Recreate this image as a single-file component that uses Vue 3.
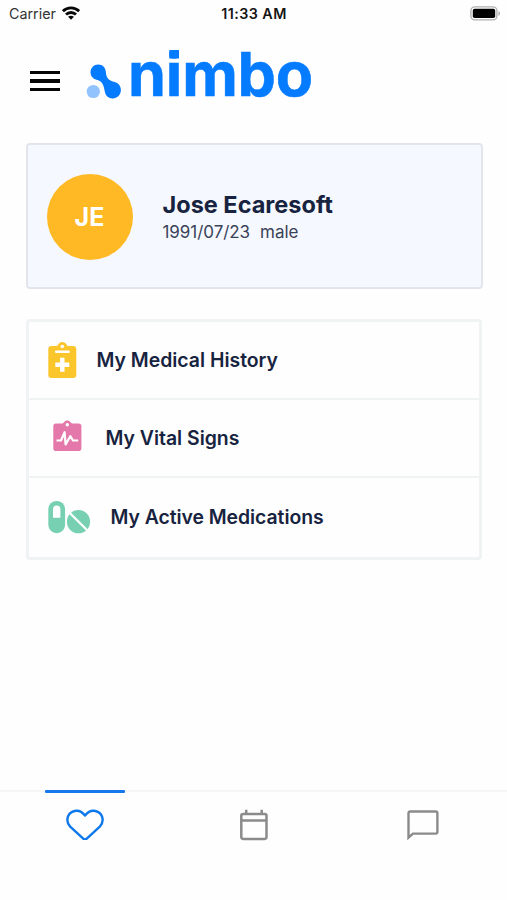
<script setup>
const items = [
  { id: 'history', label: 'My Medical History' },
  { id: 'vitals', label: 'My Vital Signs' },
  { id: 'meds', label: 'My Active Medications' },
]
</script>

<template>
  <div class="screen">
    <div class="status">
      <div class="carrier">
        <span>Carrier</span>
        <svg class="wifi" width="18" height="14" viewBox="0 0 18 14" fill="none" stroke="#080808" stroke-width="2.8">
          <path d="M.9 5.2C5.4.7 12.6.7 17.1 5.2" />
          <path d="M4 8.6C6.8 5.8 11.2 5.8 14 8.6" />
          <path d="M6.1 10.8C7.8 9.3 10.2 9.3 11.9 10.8L9 13.7Z" fill="#080808" stroke="none" />
        </svg>
      </div>
      <span class="time">11:33 AM</span>
      <svg class="battery" width="31" height="15" viewBox="0 0 31 15">
        <rect x=".9" y=".9" width="26" height="13" rx="4" fill="#fff" stroke="#b0b0b0" stroke-width="1.4" />
        <rect x="2.8" y="2.8" width="22.4" height="9.2" rx="1.8" fill="#000" />
        <path d="M28.4 5.2C30.6 5.9 30.6 9.1 28.4 9.8Z" fill="#b0b0b0" />
      </svg>
    </div>

    <header class="header">
      <button class="menu" aria-label="Menu"><i></i><i></i><i></i></button>
      <svg class="mark" width="37" height="36" viewBox="0 0 37 36">
        <circle cx="7.3" cy="28.5" r="6.6" fill="#92c3fd" />
        <path d="M12.2 1.6C16.7 1.6 19.7 5 19.9 9.3C20.2 14.8 23 17.9 27.8 18.7C32 19.4 34.9 22.7 34.9 27C34.9 31.8 31.3 35.5 26.7 35.5C22.3 35.500 19.4 32.4 18.8 28.5C17.8 21.6 15.8 17.9 11.3 16.9C7.2 16.2 4.5 13.100 4.500 9.300C4.500 5.100 7.900 1.600 12.200 1.600Z" fill="#057bff" />
      </svg>
      <span class="brand">n<span class="dotted">i</span>mbo</span>
    </header>

    <section class="profile">
      <div class="avatar">JE</div>
      <div class="who">
        <div class="name">Jose Ecaresoft</div>
        <div class="meta"><span>1991/07/23</span><span>male</span></div>
      </div>
    </section>

    <nav class="list">
      <div v-for="item in items" :key="item.id" class="row" :class="item.id">
        <svg v-if="item.id === 'history'" width="29" height="38" viewBox="0 0 29 38">
          <path d="M3.5 5H8.5C10.5 5 10 1 14.3 1S18.5 5 20 5H25Q28.3 5 28.3 8.3V33.7Q28.3 37 25 37H3.5Q.3 37 .3 33.7V8.3Q.3 5 3.5 5Z" fill="#fac62c" />
          <circle cx="14.3" cy="5.5" r="1.8" fill="#fff" />
          <path d="M8.2 10.8H20.6" stroke="#fff" stroke-width="2.6" stroke-linecap="round" />
          <path d="M14.3 16.7V30.7M7.3 23.7H21.3" stroke="#fff" stroke-width="4.4" />
        </svg>
        <svg v-else-if="item.id === 'vitals'" width="29" height="32" viewBox="0 0 29 32">
          <path d="M3 3.5H9.3C11 3.5 11 .6 14.3 .6S17.6 3.5 19.5 3.5H25.6Q28.4 3.5 28.4 6.3V28.2Q28.4 31 25.6 31H3Q.3 31 .3 28.2V6.3Q.3 3.5 3 3.5Z" fill="#e578aa" />
          <circle cx="14.3" cy="4.8" r="1.7" fill="#fff" />
          <path d="M3.5 20.5H8L11.6 12.2L12.6 24.5L17.3 16.200L20 20.500H25.200" fill="none" stroke="#fff" stroke-width="2.200" stroke-linejoin="round" />
        </svg>
        <svg v-else width="43" height="34" viewBox="0 0 43 34">
          <rect x=".3" y=".9" width="16.8" height="32.3" rx="8.4" fill="#77d0b2" />
          <path d="M5 17.8V9.3A3.7 3.7 0 0 1 12.4 9.3V17.8Z" fill="#fff" />
          <circle cx="30.5" cy="21.7" r="11.6" fill="#77d0b2" />
          <path d="M21.5 12.7L40 31" stroke="#fff" stroke-width="2.3" />
        </svg>
        <span class="label">{{ item.label }}</span>
      </div>
    </nav>

    <footer class="tabs">
      <div class="tab active">
        <svg width="38" height="31" viewBox="0 0 38 31" fill="none" stroke="#0d78ec" stroke-width="2.4" stroke-linejoin="round">
          <path d="M17.5 29.8L4.2 17.6C-.5 12.8 1 5.6 6.2 2.9C11 .4 15.8 2.4 19 6.6C22.2 2.4 27 .4 31.8 2.9C37 5.6 38.5 12.8 33.8 17.6L20.5 29.8Q19 31 17.5 29.8Z" />
        </svg>
      </div>
      <div class="tab">
        <svg width="30" height="32" viewBox="0 0 30 32" fill="none" stroke="#8b8b8b" stroke-width="2.5">
          <rect x="2.3" y="5" width="25.2" height="24.9" rx="1.8" />
          <path d="M2.3 11.4H27.5M7.2 5V.7M22.7 5V.7" />
        </svg>
      </div>
      <div class="tab">
        <svg width="32" height="32" viewBox="0 0 32 32" fill="none" stroke="#8b8b8b" stroke-width="2.4">
          <path d="M1.5 28.5V4.3Q1.5 2.5 3.3 2.5H28.6Q30.4 2.5 30.4 4.3V22.8Q30.4 24.6 28.6 24.6H6L1.5 28.5Z" />
        </svg>
      </div>
    </footer>
  </div>
</template>

<style>
body { background: #fefefe; }
</style>

<style scoped>
.screen {
  width: 507px;
  height: 900px;
  display: flex;
  flex-direction: column;
  background: #fefefe;
  font-family: Inter, "Liberation Sans", sans-serif;
  color: #17233f;
  overflow: hidden;
}
svg { display: block; flex: none; }
.status {
  display: grid;
  grid-template-columns: 1fr auto 1fr;
  align-items: center;
  height: 28px;
  padding: 0 6px 2px 9px;
  box-sizing: border-box;
  color: #151515;
  font-size: 14.3px;
  flex: none;
}
.carrier { display: flex; align-items: center; gap: 6px; color: #333; }
.wifi { margin-top: -1px; }
.time { margin-right: 2px; font-weight: 600; font-size: 14.3px; letter-spacing: .45px; }
.battery { justify-self: end; }
.header {
  display: flex;
  align-items: flex-start;
  height: 115px;
  padding-left: 30px;
  flex: none;
}
.menu {
  width: 30px;
  padding: 0;
  border: 0;
  margin-top: 43px;
  background: none;
  display: flex;
  flex-direction: column;
  gap: 5px;
}
.menu i { height: 3.3px; background: #050505; }
.mark { margin: 35px 0 0 26px; }
.brand {
  margin: 16px 0 0 5px;
  font-size: 61px;
  line-height: 60px;
  font-weight: 700;
  letter-spacing: -.2px;
  color: #057bff;
  -webkit-text-stroke: .5px #057bff;
}
/* squares off the dot of the i */
.dotted {
  position: relative;
  display: inline-block;
  clip-path: polygon(3.5px 6px, 13.2px 6px, 13.2px 14.5px, 3.5px 14.5px, 3.5px 18px, 100% 18px, 100% 100%, 0 100%, 0 18px, 3.5px 18px);
}
.dotted::before {
  content: "";
  position: absolute;
  left: 3.5px;
  top: 6px;
  width: 10px;
  height: 9px;
  background: #057bff;
}
.profile {
  display: flex;
  align-items: center;
  height: 146px;
  margin: 0 24.5px 0 25.5px;
  padding-left: 19px;
  box-sizing: border-box;
  border: 2.5px solid #e2e6ea;
  border-radius: 4px;
  background: #f5f8fe;
  flex: none;
}
.avatar {
  width: 86px;
  height: 86px;
  margin-top: 1px;
  border-radius: 50%;
  background: #ffb925;
  color: #fff;
  font-weight: 700;
  font-size: 25px;
  display: flex;
  align-items: center;
  justify-content: center;
}
.who { margin: 3px 0 0 30px; }
.name { font-size: 23.5px; line-height: 28px; font-weight: 700; }
.meta { font-size: 17px; line-height: 26px; color: #3a4259; display: flex; gap: 10px; letter-spacing: -.05px; }
.list {
  margin: 30px 25px 0 25.5px;
  border: 3px solid #eff3f4;
  border-radius: 4px;
  flex: none;
}
.row {
  display: flex;
  align-items: center;
  height: 76px;
  padding-left: 19px;
  box-sizing: border-box;
  gap: 20px;
}
.row + .row { border-top: 2px solid #eff3f4; height: 78px; }
.row.vitals { padding-left: 24px; gap: 24px; }
.row.vitals svg { margin-top: -5px; }
.row.meds { height: 81px; padding-bottom: 1px; }
.label { font-size: 19.4px; font-weight: 600; }
.meds .label { letter-spacing: -.05px; }
.tabs {
  margin-top: auto;
  height: 110px;
  display: grid;
  grid-template-columns: repeat(3, 1fr);
  border-top: 2px solid #f6f6f6;
  box-sizing: border-box;
  flex: none;
}
.tab { display: flex; justify-content: center; align-items: flex-start; padding-top: 17px; }
.tab.active::before {
  content: "";
  position: absolute;
  width: 80px;
  height: 3px;
  margin: -19px 0 0 1px;
  border-radius: 1px;
  background: #1678eb;
}
</style>
